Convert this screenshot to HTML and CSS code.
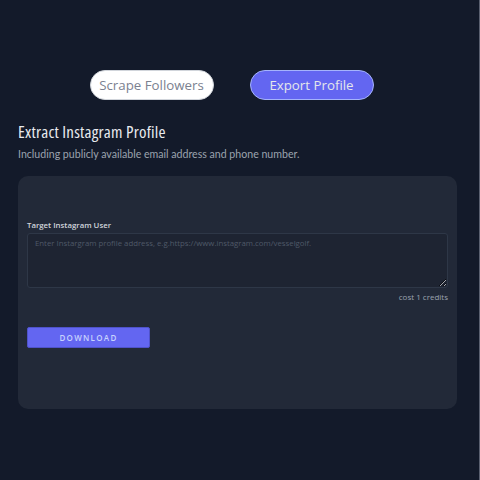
FILE: index.html
```html
<!DOCTYPE html>
<html>
<head>
<meta charset="utf-8">
<link rel="stylesheet" href="styles.css">
</head>
<body>
<div class="page">
  <div class="tabs">
    <button class="tab tab-light">Scrape Followers</button>
    <button class="tab tab-active">Export Profile</button>
  </div>
  <h1 class="title">Extract Instagram Profile</h1>
  <p class="subtitle">Including publicly available email address and phone number.</p>
  <div class="card">
    <label class="label">Target Instagram User</label>
    <textarea class="input" placeholder="Enter Instargram profile address, e.g.https://www.instagram.com/vesselgolf."></textarea>
    <div class="cost">cost 1 credits</div>
    <button class="download">DOWNLOAD</button>
  </div>
</div>
</body>
</html>
```
FILE: styles.css
```css
html, body {
  margin: 0;
  padding: 0;
  background: #131a2a;
  height: 100%;
}
body {
  font-family: "Open Sans", "Noto Sans", sans-serif;
  border-right: 1px solid #5a6070;
  box-sizing: border-box;
}
.page {
  padding: 70px 22px 0 18px;
}
.tabs {
  display: flex;
  justify-content: center;
  gap: 36px;
  padding-right: 12px;
}
.tab {
  width: 124px;
  height: 30px;
  border-radius: 15px;
  font-family: "Open Sans", sans-serif;
  font-size: 13.3px;
  padding: 0;
  box-sizing: border-box;
}
.tab-light {
  background: #ffffff;
  color: #7b8190;
  border: 1px solid #d1d5db;
}
.tab-active {
  background: #6366f1;
  color: #e5e7eb;
  border: 1px solid #a5b4fc;
}
.title {
  margin: 20px 0 0 0;
  font-family: "Open Sans", sans-serif;
  font-stretch: 80%;
  font-weight: 370;
  font-size: 17px;
  letter-spacing: 0.2px;
  color: #e8eaee;
  line-height: 24px;
}
.subtitle {
  margin: 2px 0 0 0;
  font-family: Lato, sans-serif;
  font-size: 10.6px;
  color: #9ca3af;
  line-height: 16px;
}
.card {
  margin-top: 14px;
  background: #222938;
  border-radius: 10px;
  height: 233px;
  box-sizing: border-box;
  padding: 43px 9px 0 9px;
  display: flex;
  flex-direction: column;
}
.label {
  font-size: 7.8px;
  font-weight: 600;
  color: #d1d5db;
  line-height: 12px;
}
.input {
  margin-top: 2px;
  height: 55px;
  background: #1e2432;
  border: 1px solid #2e3747;
  border-radius: 3px;
  padding: 4px 7px;
  font-family: "Open Sans", sans-serif;
  font-size: 7.8px;
  color: #d1d5db;
  resize: vertical;
  box-sizing: border-box;
  outline: none;
}
.input::placeholder {
  color: #4f5968;
}
.cost {
  margin-top: 3px;
  text-align: right;
  font-size: 8px;
  color: #9ca3af;
  line-height: 12px;
}
.download {
  margin-top: 24px;
  width: 123px;
  height: 21px;
  background: #6366f1;
  border: 1px solid #4f52c9;
  border-radius: 2px;
  color: #c7d2fe;
  font-family: "Open Sans", sans-serif;
  font-size: 8px;
  font-weight: 600;
  letter-spacing: 1.3px;
  padding: 0;
}
```
